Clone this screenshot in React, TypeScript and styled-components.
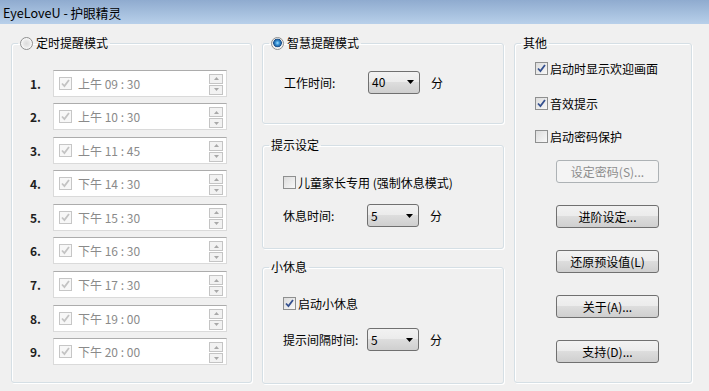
import styled, { createGlobalStyle } from "styled-components";

const GlobalStyle = createGlobalStyle`
  body {
    margin: 0;
    background: #f0f0f0;
    overflow: hidden;
  }
`;

const Window = styled.div`
  width: 709px;
  height: 391px;
  background: #f0f0f0;
  display: flex;
  flex-direction: column;
  font-family: "Noto Sans CJK SC", "Liberation Sans", sans-serif;
  font-size: 12px;
  color: #000;
  overflow: hidden;
`;

const TitleBar = styled.div`
  height: 24px;
  padding-left: 3px;
  display: flex;
  align-items: center;
  font-size: 12.6px;
  background: linear-gradient(#8fabcf, #b8d0ea);
  color: #000;
`;

const Body = styled.div`
  display: grid;
  grid-template-columns: 241px 242px 178px;
  column-gap: 10px;
  padding: 11px 0 0 11px;
`;

const Column = styled.div`
  display: flex;
  flex-direction: column;
`;

interface GroupProps {
  h: number;
  mt?: number;
}
const Group = styled.fieldset<GroupProps>`
  box-sizing: border-box;
  margin: ${(p: GroupProps) => `${p.mt || 0}px`} 0 0 0;
  padding: 0;
  min-width: 0;
  height: ${(p: GroupProps) => `${p.h}px`};
  border: 1px solid #d5dfe5;
  border-radius: 3px;
  box-shadow: 1px 1px 0 #fff, inset 1px 1px 0 #fff;
`;

const Legend = styled.legend`
  margin-left: 6px;
  padding: 0 2px;
  line-height: 16px;
`;

const LegendInner = styled.span`
  display: inline-flex;
  align-items: center;
  gap: 3px;
`;

const Radio = styled.span<{ checked?: boolean }>`
  box-sizing: border-box;
  width: 13px;
  height: 13px;
  border-radius: 50%;
  border: 1px solid #8e8f8f;
  background: ${(p) =>
    p.checked
      ? "radial-gradient(circle at 50% 45%, #9fdcff 0, #3592d6 2px, #1b4f8a 4px, #e6e6e6 4.6px, #fafafa 6px)"
      : "radial-gradient(circle at 50% 50%, #dcdcdc 0, #e8e8e8 3px, #fdfdfd 6px)"};
  flex: none;
`;

const Box = styled.span<{ disabled?: boolean }>`
  box-sizing: border-box;
  width: 13px;
  height: 13px;
  flex: none;
  display: inline-flex;
  border: 1px solid ${(p) => (p.disabled ? "#c6c6c6" : "#8e8f8f")};
  background: ${(p) =>
    p.disabled ? "#f7f7f7" : "linear-gradient(135deg, #dcdcdc, #f8f8f8)"};
`;

function CheckBox({ checked, disabled }: { checked?: boolean; disabled?: boolean }) {
  return (
    <Box disabled={disabled}>
      {checked && (
        <svg width="11" height="11" viewBox="0 0 11 11">
          <path
            d="M2 5.5 L4.4 8 L9 2"
            fill="none"
            stroke={disabled ? "#c3c3c3" : "#34508f"}
            strokeWidth="1.8"
          />
        </svg>
      )}
    </Box>
  );
}

/* left column: timed reminders */
const TimeList = styled.div`
  display: flex;
  flex-direction: column;
  gap: 6.6px;
  padding: 17px 0 0 18px;
`;

const TimeRow = styled.div`
  display: flex;
  align-items: center;
`;

const RowNum = styled.span`
  width: 23px;
  font-weight: 600;
  color: #1e1e1e;
`;

const TimeBox = styled.div`
  box-sizing: border-box;
  width: 174px;
  height: 27px;
  display: flex;
  align-items: center;
  padding-left: 5px;
  background: #fff;
  border: 1px solid #dadada;
  border-top-color: #acacac;
`;

const TimeText = styled.span`
  margin-left: 6px;
  color: #8a8a8a;
`;

const Spinner = styled.div`
  margin-left: auto;
  margin-right: 3px;
  margin-top: 2px;
  display: flex;
  flex-direction: column;
  gap: 1px;
`;

const SpinBtn = styled.div`
  box-sizing: border-box;
  width: 14px;
  height: 10px;
  border: 1px solid #c4c4c4;
  background: #f2f2f2;
  display: flex;
  align-items: center;
  justify-content: center;
`;

function SpinArrow({ up }: { up?: boolean }) {
  return (
    <svg width="5" height="3" viewBox="0 0 5 3">
      <path d={up ? "M0 3 L2.5 0 L5 3 Z" : "M0 0 L5 0 L2.5 3 Z"} fill="#a8a8a8" />
    </svg>
  );
}

/* middle column */
interface PadProps {
  pt: number;
  pl: number;
  gap?: number;
}
const GroupBody = styled.div<PadProps>`
  display: flex;
  flex-direction: column;
  padding: ${(p: PadProps) => `${p.pt}px 0 0 ${p.pl}px`};
  gap: ${(p: PadProps) => `${p.gap || 0}px`};
`;

const FieldRow = styled.div`
  display: flex;
  align-items: center;
  height: 23px;
`;

const FieldLabel = styled.span`
  width: 84px;
`;

const Unit = styled.span`
  margin-left: 11px;
`;

const Combo = styled.div`
  box-sizing: border-box;
  width: 52px;
  height: 23px;
  border: 1px solid #707070;
  border-radius: 3px;
  background: linear-gradient(#f2f2f2 0%, #ebebeb 50%, #dddddd 50%, #cfcfcf 100%);
  display: flex;
  align-items: center;
  justify-content: space-between;
  padding: 0 5px 0 3px;
  line-height: 16px;
`;

function ComboBox({ value }: { value: string }) {
  return (
    <Combo>
      <span>{value}</span>
      <svg width="7" height="4" viewBox="0 0 7 4">
        <path d="M0 0 L7 0 L3.5 4 Z" fill="#000" />
      </svg>
    </Combo>
  );
}

const CheckRow = styled.label`
  display: flex;
  align-items: center;
  gap: 2px;
  height: 13px;
  line-height: 13px;
  white-space: nowrap;
`;

/* right column */
const ButtonStack = styled.div`
  display: flex;
  flex-direction: column;
  gap: 22px;
  margin-left: 21px;
  margin-top: 17px;
`;

const Button = styled.button`
  box-sizing: border-box;
  width: 103px;
  height: 23px;
  padding: 0;
  font: inherit;
  line-height: 16px;
  color: #000;
  border: 1px solid #707070;
  border-radius: 3px;
  background: linear-gradient(#f2f2f2 0%, #ebebeb 50%, #dddddd 50%, #cfcfcf 100%);

  &:disabled {
    color: #8d8d8d;
    border-color: #adb2b5;
    background: #f4f4f4;
  }
`;

const times = [
  "上午 09 : 30",
  "上午 10 : 30",
  "上午 11 : 45",
  "下午 14 : 30",
  "下午 15 : 30",
  "下午 16 : 30",
  "下午 17 : 30",
  "下午 19 : 00",
  "下午 20 : 00",
];

export default function App() {
  return (
    <Window>
      <GlobalStyle />
      <TitleBar>EyeLoveU - 护眼精灵</TitleBar>
      <Body>
        <Group h={348}>
          <Legend>
            <LegendInner>
              <Radio />
              定时提醒模式
            </LegendInner>
          </Legend>
          <TimeList>
            {times.map((t, i) => (
              <TimeRow key={t}>
                <RowNum>{i + 1}.</RowNum>
                <TimeBox>
                  <CheckBox checked disabled />
                  <TimeText>{t}</TimeText>
                  <Spinner>
                    <SpinBtn>
                      <SpinArrow up />
                    </SpinBtn>
                    <SpinBtn>
                      <SpinArrow />
                    </SpinBtn>
                  </Spinner>
                </TimeBox>
              </TimeRow>
            ))}
          </TimeList>
        </Group>

        <Column>
          <Group h={89}>
            <Legend>
              <LegendInner>
                <Radio checked />
                智慧提醒模式
              </LegendInner>
            </Legend>
            <GroupBody pt={18} pl={21}>
              <FieldRow>
                <FieldLabel>工作时间:</FieldLabel>
                <ComboBox value="40" />
                <Unit>分</Unit>
              </FieldRow>
            </GroupBody>
          </Group>

          <Group h={112} mt={13}>
            <Legend>提示设定</Legend>
            <GroupBody pt={23} pl={20} gap={15}>
              <CheckRow>
                <CheckBox />
                儿童家长专用 (强制休息模式)
              </CheckRow>
              <FieldRow>
                <FieldLabel>休息时间:</FieldLabel>
                <ComboBox value="5" />
                <Unit>分</Unit>
              </FieldRow>
            </GroupBody>
          </Group>

          <Group h={125} mt={10}>
            <Legend>小休息</Legend>
            <GroupBody pt={22} pl={20} gap={18}>
              <CheckRow>
                <CheckBox checked />
                启动小休息
              </CheckRow>
              <FieldRow>
                <FieldLabel>提示间隔时间:</FieldLabel>
                <ComboBox value="5" />
                <Unit>分</Unit>
              </FieldRow>
            </GroupBody>
          </Group>
        </Column>

        <Group h={348}>
          <Legend>其他</Legend>
          <GroupBody pt={11} pl={20}>
            <CheckRow>
              <CheckBox checked />
              启动时显示欢迎画面
            </CheckRow>
            <CheckRow style={{ marginTop: 22 }}>
              <CheckBox checked />
              音效提示
            </CheckRow>
            <CheckRow style={{ marginTop: 20 }}>
              <CheckBox />
              启动密码保护
            </CheckRow>
            <ButtonStack>
              <Button disabled>设定密码(S)...</Button>
              <Button>进阶设定...</Button>
              <Button>还原预设值(L)</Button>
              <Button>关于(A)...</Button>
              <Button>支持(D)...</Button>
            </ButtonStack>
          </GroupBody>
        </Group>
      </Body>
    </Window>
  );
}
